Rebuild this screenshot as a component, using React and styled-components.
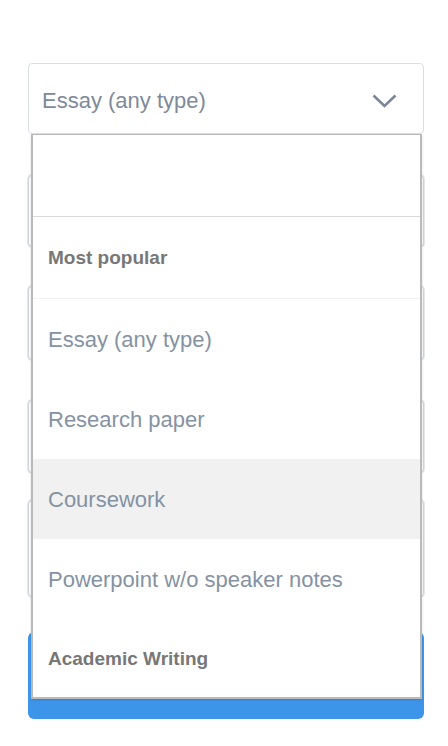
import React, { useState } from 'react'
import styled, { createGlobalStyle } from 'styled-components'

const GlobalStyle = createGlobalStyle`
  body {
    margin: 0;
    background: #ffffff;
    font-family: "Liberation Sans", Arial, sans-serif;
  }
`

const Page = styled.div`
  padding: 63px 24px 0 28px;
`

const Form = styled.div`
  display: flex;
  flex-direction: column;
`

const SelectWrap = styled.div`
  position: relative;
  z-index: 2;
`

const SelectBox = styled.div`
  height: 71px;
  box-sizing: border-box;
  border: 1px solid #dadfe4;
  border-radius: 4px;
  display: flex;
  align-items: center;
  justify-content: space-between;
  padding: 4px 26px 0 13px;
  background: #fff;
`

const SelectText = styled.span`
  font-size: 22px;
  color: #7e8a9a;
`

const Menu = styled.div`
  position: absolute;
  top: 100%;
  left: 3px;
  right: 2px;
  background: #fff;
  border: 2px solid #bababa;
  border-top-width: 1px;
  box-shadow: 0 1px 2px rgba(0, 0, 0, 0.15);
`

const Search = styled.input`
  display: block;
  width: 100%;
  height: 82px;
  box-sizing: border-box;
  border: none;
  border-bottom: 1px solid #d9d9d9;
  outline: none;
  padding: 0 15px;
  font-size: 20px;
  font-family: inherit;
`

const GroupHeader = styled.div`
  height: ${p => p.$h}px;
  box-sizing: border-box;
  display: flex;
  align-items: center;
  padding: 1px 0 0 15px;
  font-size: 19px;
  font-weight: bold;
  color: #777777;
  border-bottom: ${p => (p.$divider ? '1px solid #f2f2f2' : 'none')};
`

const Option = styled.div`
  height: 80px;
  display: flex;
  align-items: center;
  padding: 2px 0 0 15px;
  box-sizing: border-box;
  font-size: 22px;
  color: #8592a3;
  background: ${p => (p.$active ? '#f1f1f1' : '#fff')};
`

const Field = styled.div`
  height: ${p => p.$h}px;
  margin-top: ${p => p.$mt}px;
  box-sizing: border-box;
  border: 1px solid #cfd4d9;
  border-radius: 4px;
  box-shadow: 0 0 0 1px #e4e7ea;
  background: #fff;
`

const Submit = styled.button`
  height: 87px;
  margin-top: 35px;
  border: none;
  border-radius: 6px;
  background: #3d95ea;
`

const Chevron = () => (
  <svg width="25" height="14" viewBox="0 0 25 14">
    <path d="M1.5 1.5 L12.5 12 L23.5 1.5" fill="none" stroke="#7b8799" strokeWidth="2.6" />
  </svg>
)

const options = ['Essay (any type)', 'Research paper', 'Coursework', 'Powerpoint w/o speaker notes']

export default function App() {
  const [active] = useState('Coursework')

  return (
    <Page>
      <GlobalStyle />
      <Form>
        <SelectWrap>
          <SelectBox>
            <SelectText>Essay (any type)</SelectText>
            <Chevron />
          </SelectBox>
          <Menu>
            <Search />
            <GroupHeader $h={82} $divider>Most popular</GroupHeader>
            {options.map(o => (
              <Option key={o} $active={o === active}>{o}</Option>
            ))}
            <GroupHeader $h={78}>Academic Writing</GroupHeader>
          </Menu>
        </SelectWrap>
        <Field $h={72} $mt={41} />
        <Field $h={74} $mt={39} />
        <Field $h={73} $mt={40} />
        <Field $h={97} $mt={27} />
        <Submit />
      </Form>
    </Page>
  )
}
